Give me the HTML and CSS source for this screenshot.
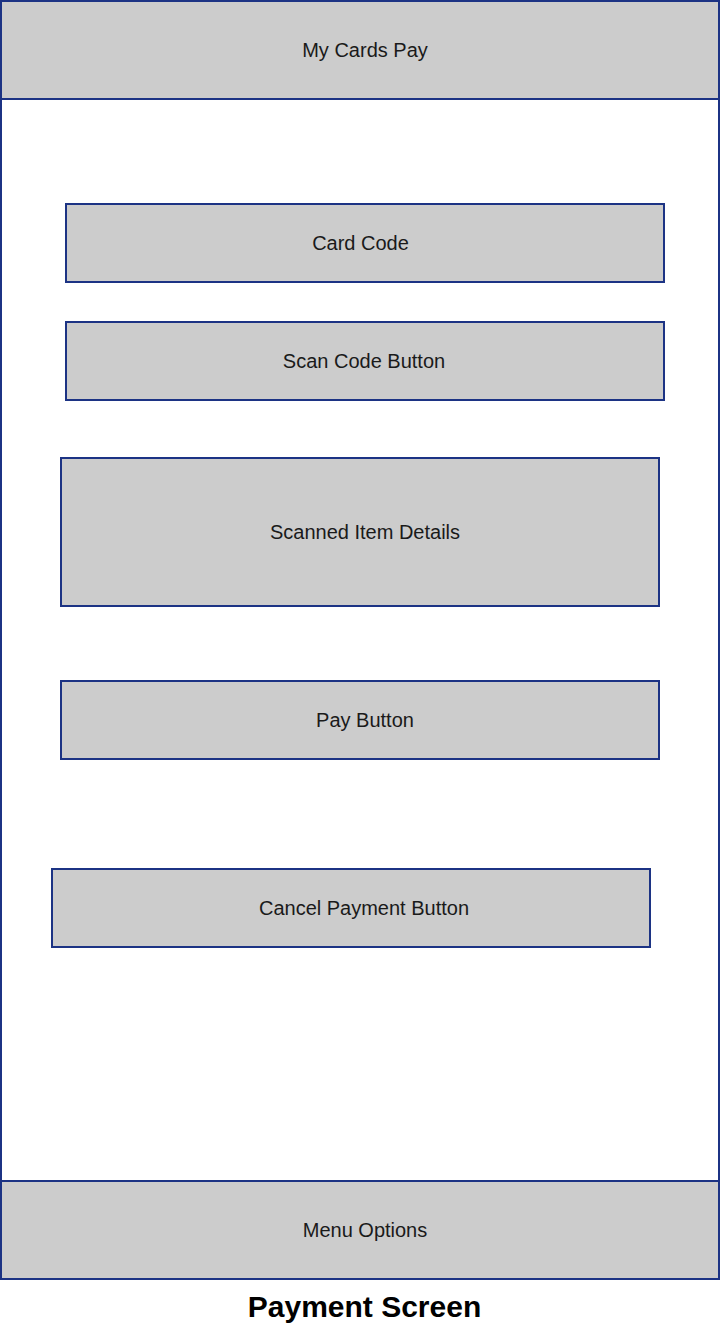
FILE: index.html
```html
<!DOCTYPE html>
<html>
<head>
<meta charset="utf-8">
<link rel="stylesheet" href="styles.css">
</head>
<body>
<div class="frame">
  <div class="bar">My Cards Pay</div>
  <div class="main">
    <div class="box card-code">Card Code</div>
    <div class="box scan">Scan Code Button</div>
    <div class="box details">Scanned Item Details</div>
    <div class="box pay">Pay Button</div>
    <div class="box cancel">Cancel Payment Button</div>
  </div>
  <div class="bar">Menu Options</div>
</div>
<div class="title">Payment Screen</div>
</body>
</html>
```
FILE: styles.css
```css
* { box-sizing: border-box; }
html, body { margin: 0; padding: 0; background: #ffffff; }
body {
  width: 720px;
  font-family: "Liberation Sans", Arial, sans-serif;
}
.frame {
  width: 720px;
  height: 1280px;
  display: flex;
  flex-direction: column;
}
.bar {
  height: 100px;
  flex: none;
  border: 2px solid #1c3384;
  background: #cccccc;
  color: #1a1a1a;
  font-size: 20px;
  padding-left: 10px;
  display: flex;
  align-items: center;
  justify-content: center;
}
.main {
  flex: 1;
  border-left: 2px solid #1c3384;
  border-right: 2px solid #1c3384;
  margin-top: -2px;
  margin-bottom: -2px;
  display: flex;
  flex-direction: column;
  align-items: flex-start;
}
.box {
  width: 600px;
  height: 80px;
  flex: none;
  border: 2px solid #1c3384;
  background: #cccccc;
  color: #1a1a1a;
  font-size: 20px;
  display: flex;
  align-items: center;
  justify-content: center;
}
.card-code { margin-top: 105px; margin-left: 63px; padding-right: 9px; }
.scan { margin-top: 38px; margin-left: 63px; padding-right: 2px; }
.details { margin-top: 56px; margin-left: 58px; height: 150px; padding-left: 10px; }
.pay { margin-top: 73px; margin-left: 58px; padding-left: 10px; }
.cancel { margin-top: 108px; margin-left: 49px; padding-left: 26px; }
.title {
  width: 729px;
  text-align: center;
  font-weight: bold;
  font-size: 30px;
  line-height: 50px;
  padding-top: 2px;
  color: #000000;
}
```
